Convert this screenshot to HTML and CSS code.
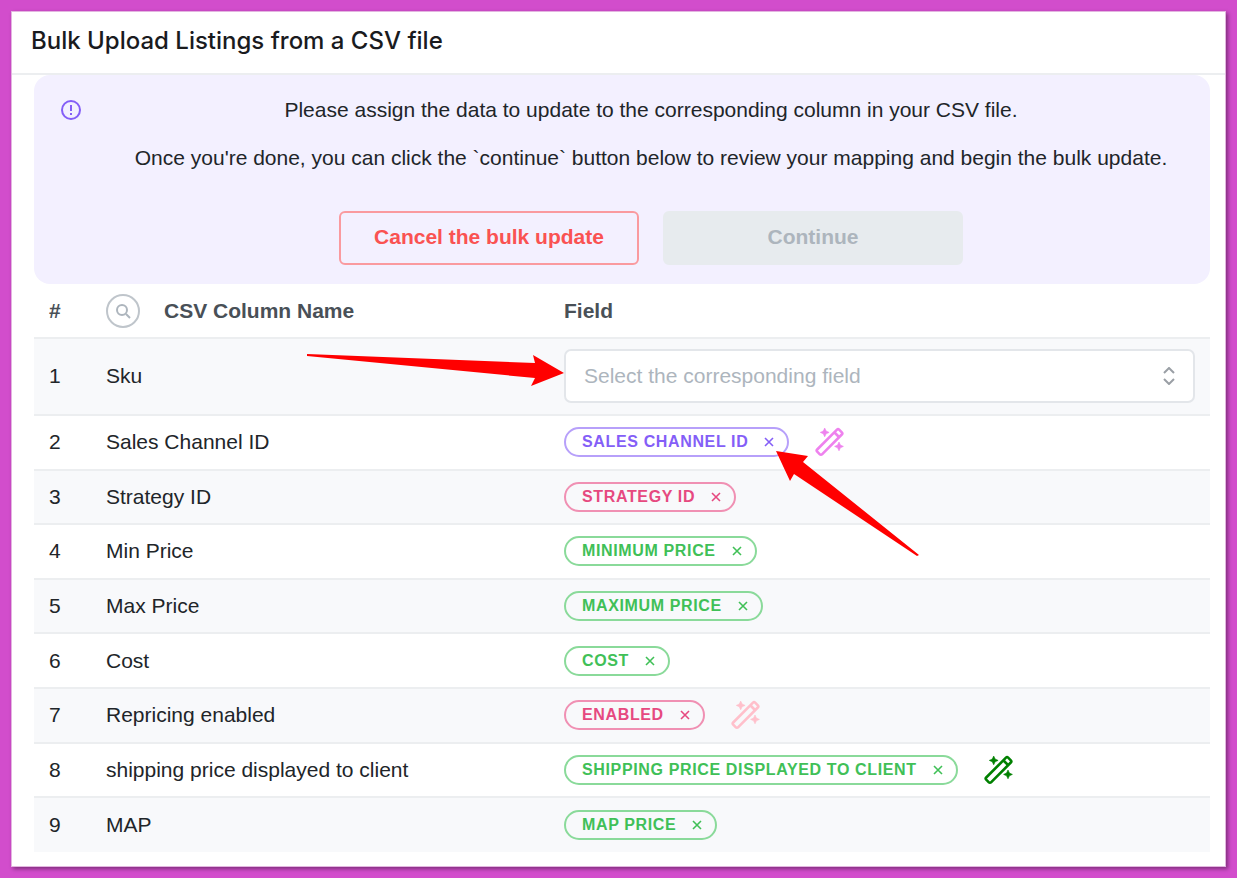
FILE: index.html
```html
<!DOCTYPE html>
<html lang="en">
<head>
    <meta charset="UTF-8">
    <meta name="viewport" content="width=device-width, initial-scale=1.0">
    <title>Bulk Upload Listings</title>
    <link rel="stylesheet" href="styles.css">
</head>
<body>
<!-- shared icons -->
<svg class="sprite" aria-hidden="true">
    <symbol id="icon-x" viewBox="0 0 12 12">
        <path d="M2 2l8 8M10 2l-8 8" fill="none" stroke="currentColor" stroke-width="1.6"/>
    </symbol>
    <symbol id="icon-wand" viewBox="0 0 30 30">
        <g fill="none" stroke="currentColor" stroke-width="2.6">
            <rect x="-1" y="11.6" width="31" height="6.8" rx="1.5" transform="rotate(-45 14.5 15)"/>
            <path d="M19.5 5.500l4.500 4.500"/>
        </g>
        <path d="M9.700 1l1.400 3 3 1.400-3 1.400-1.400 3-1.400-3-3-1.400 3-1.400zM24 15l1.400 3 3 1.400-3 1.400-1.400 3-1.400-3-3-1.400 3-1.400z" fill="currentColor" stroke="currentColor" stroke-width="0.6"/>
    </symbol>
</svg>

<main class="modal">
    <header class="modal-header">
        <h1>Bulk Upload Listings from a CSV file</h1>
    </header>

    <div class="modal-body">
        <section class="notice">
            <svg class="notice-icon" viewBox="0 0 22 22" aria-hidden="true">
                <circle cx="11" cy="11" r="9" fill="none" stroke="currentColor" stroke-width="2"/>
                <path d="M11 6v6M11 14v2" fill="none" stroke="currentColor" stroke-width="2"/>
            </svg>
            <div class="notice-content">
                <p>Please assign the data to update to the corresponding column in your CSV file.</p>
                <p>Once you're done, you can click the `continue` button below to review your mapping and begin the bulk update.</p>
                <div class="actions">
                    <button type="button" class="btn btn-cancel">Cancel the bulk update</button>
                    <button type="button" class="btn btn-continue" disabled>Continue</button>
                </div>
            </div>
        </section>

        <div class="table-wrap">
            <table class="mapping">
                <thead>
                <tr>
                    <th class="col-num">#</th>
                    <th class="col-name">
                        <div class="name-head">
                            <button type="button" class="search" aria-label="Search columns">
                                <svg viewBox="0 0 16 16" aria-hidden="true">
                                    <circle cx="7" cy="7" r="5"/>
                                    <path d="M11 11l4 4"/>
                                </svg>
                            </button>
                            CSV Column Name
                        </div>
                    </th>
                    <th>Field</th>
                </tr>
                </thead>
                <tbody>
                <tr class="row-select">
                    <td>1</td>
                    <td><label for="field-1">Sku</label></td>
                    <td>
                        <div class="select-wrap">
                            <select id="field-1">
                                <option>Select the corresponding field</option>
                            </select>
                            <svg class="select-icon" viewBox="0 0 12 18" aria-hidden="true">
                                <path d="M1 6l5-5 5 5M1 12l5 5 5-5"/>
                            </svg>
                        </div>
                    </td>
                </tr>
                <tr>
                    <td>2</td>
                    <td>Sales Channel ID</td>
                    <td><div class="field">
                        <span class="tag violet">Sales Channel ID<button type="button" aria-label="Remove"><svg><use href="#icon-x"/></svg></button></span>
                        <svg class="wand wand-violet"><use href="#icon-wand"/></svg>
                    </div></td>
                </tr>
                <tr>
                    <td>3</td>
                    <td>Strategy ID</td>
                    <td><div class="field">
                        <span class="tag pink">Strategy ID<button type="button" aria-label="Remove"><svg><use href="#icon-x"/></svg></button></span>
                    </div></td>
                </tr>
                <tr>
                    <td>4</td>
                    <td>Min Price</td>
                    <td><div class="field">
                        <span class="tag green">Minimum Price<button type="button" aria-label="Remove"><svg><use href="#icon-x"/></svg></button></span>
                    </div></td>
                </tr>
                <tr>
                    <td>5</td>
                    <td>Max Price</td>
                    <td><div class="field">
                        <span class="tag green">Maximum Price<button type="button" aria-label="Remove"><svg><use href="#icon-x"/></svg></button></span>
                    </div></td>
                </tr>
                <tr>
                    <td>6</td>
                    <td>Cost</td>
                    <td><div class="field">
                        <span class="tag green">Cost<button type="button" aria-label="Remove"><svg><use href="#icon-x"/></svg></button></span>
                    </div></td>
                </tr>
                <tr>
                    <td>7</td>
                    <td>Repricing enabled</td>
                    <td><div class="field">
                        <span class="tag pink">Enabled<button type="button" aria-label="Remove"><svg><use href="#icon-x"/></svg></button></span>
                        <svg class="wand wand-pink"><use href="#icon-wand"/></svg>
                    </div></td>
                </tr>
                <tr>
                    <td>8</td>
                    <td>shipping price displayed to client</td>
                    <td><div class="field">
                        <span class="tag green">Shipping Price Displayed to Client<button type="button" aria-label="Remove"><svg><use href="#icon-x"/></svg></button></span>
                        <svg class="wand wand-green"><use href="#icon-wand"/></svg>
                    </div></td>
                </tr>
                <tr>
                    <td>9</td>
                    <td>MAP</td>
                    <td><div class="field">
                        <span class="tag green">MAP Price<button type="button" aria-label="Remove"><svg><use href="#icon-x"/></svg></button></span>
                    </div></td>
                </tr>
                </tbody>
            </table>
        </div>
    </div>
</main>

<!-- arrows drawn over the page -->
<svg class="arrows" width="1237" height="878" aria-hidden="true">
    <path d="M307 354L535 363 533 355 564 373 531 386 535 378 307 356z"/>
    <path d="M776 451L808 456 803 462 919 555 917 556 794 474 790 481z"/>
</svg>
</body>
</html>
```
FILE: styles.css
```css
* {
    box-sizing: border-box;
}

body {
    margin: 0;
    min-height: 100vh;
    padding: 11px;
    display: flex;
    background-color: #d24dcc;
    font-family: "Liberation Sans", Arial, sans-serif;
    font-size: 21px;
    line-height: 34px;
    color: #212529;
}

button,
select {
    font: inherit;
}

.sprite {
    position: absolute;
    width: 0;
    height: 0;
}

.modal {
    flex: 1;
    display: flex;
    flex-direction: column;
    background-color: #fff;
    border: 1px solid #e3b5e0;
    box-shadow: 2px 2px 4px rgba(0, 0, 0, 0.4);
}

.modal-header {
    padding: 12px 19px 15px;
    border-bottom: 2px solid #eceef0;
}

.modal-header h1 {
    margin: 0;
    font-family: Inter, sans-serif;
    font-size: 24px;
    font-weight: 500;
    color: #1a1b1e;
}

.modal-body {
    flex: 1;
    display: flex;
    flex-direction: column;
    padding: 0 15px 14px 22px;
}

.notice {
    display: flex;
    gap: 36px;
    padding: 18px 26px 19px;
    background-color: #f3f0ff;
    border-radius: 16px;
}

.notice-icon {
    flex: none;
    width: 22px;
    height: 22px;
    margin-top: 6px;
    color: #845ef7;
}

.notice-content {
    flex: 1;
    text-align: center;
}

.notice-content p {
    margin: 0 0 14px;
}

.actions {
    display: flex;
    justify-content: center;
    gap: 24px;
    margin-top: 36px;
}

.btn {
    width: 300px;
    height: 54px;
    padding: 0 0 2px;
    font-weight: bold;
    border-radius: 6px;
}

.btn-cancel {
    background: none;
    border: 2px solid #fa9a9f;
    color: #fa5252;
}

.btn-continue {
    background-color: #e7ebee;
    border: 2px solid #e7ebee;
    color: #adb5bd;
}

.table-wrap {
    flex: 1;
    display: grid;
}

.mapping {
    width: 100%;
    border-collapse: collapse;
}

th,
td {
    padding: 0 15px;
    text-align: left;
}

th {
    height: 54px;
    color: #495057;
}

td {
    height: 54px;
    border-top: 2px solid #eceef0;
}

tbody tr:nth-child(odd) {
    background-color: #f8f9fb;
}

.row-select td {
    height: 76px;
}

.col-num {
    width: 57px;
}

.col-name {
    width: 458px;
}

.name-head {
    display: flex;
    align-items: center;
    gap: 24px;
}

.search {
    width: 34px;
    height: 34px;
    padding: 0;
    display: flex;
    align-items: center;
    justify-content: center;
    background: none;
    border: 2px solid #bfc5cb;
    border-radius: 50%;
}

.search svg {
    width: 16px;
    height: 16px;
    fill: none;
    stroke: #adb5bd;
    stroke-width: 2;
}

.select-wrap {
    position: relative;
    display: flex;
}

.select-wrap select {
    width: 100%;
    height: 54px;
    padding: 0 18px;
    appearance: none;
    background-color: #fff;
    border: 2px solid #e3e6ea;
    border-radius: 7px;
    color: #adb5bd;
}

.select-icon {
    position: absolute;
    right: 20px;
    top: 18px;
    width: 12px;
    height: 18px;
    fill: none;
    stroke: #9a9fa5;
    stroke-width: 2;
    pointer-events: none;
}

.field {
    display: flex;
    align-items: center;
    gap: 26px;
}

.tag {
    height: 30px;
    display: flex;
    align-items: center;
    gap: 15px;
    padding: 0 12px 0 16px;
    border: 2px solid;
    border-radius: 15px;
    font-size: 16px;
    font-weight: bold;
    letter-spacing: 0.04em;
    line-height: 26px;
    text-transform: uppercase;
}

.tag button {
    width: 12px;
    height: 12px;
    padding: 0;
    display: flex;
    background: none;
    border: 0;
    color: inherit;
}

.tag svg {
    width: 12px;
    height: 12px;
}

.violet {
    color: #845ef7;
    border-color: #b7a0fa;
}

.pink {
    color: #e64980;
    border-color: #f090b3;
}

.green {
    color: #40c057;
    border-color: #8ada9a;
}

.wand {
    width: 30px;
    height: 30px;
}

.wand-violet {
    color: violet;
}

.wand-pink {
    color: pink;
}

.wand-green {
    color: green;
}

.arrows {
    position: absolute;
    left: 0;
    top: 0;
    fill: #ff0000;
    pointer-events: none;
}
```
